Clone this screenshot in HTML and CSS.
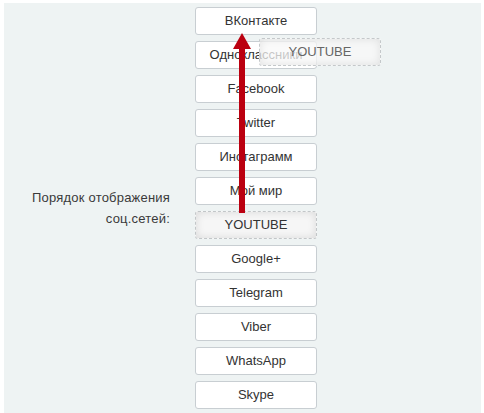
FILE: index.html
```html
<!DOCTYPE html>
<html lang="ru">
<head>
  <meta charset="UTF-8">
  <title>Порядок соц.сетей</title>
  <link rel="stylesheet" href="styles.css">
</head>
<body>
  <div class="panel">
    <div class="row">
      <div class="label">Порядок отображения<br>соц.сетей:</div>
      <ul class="sortable">
        <li class="item">ВКонтакте</li>
        <li class="item">Одноклассники</li>
        <li class="item">Facebook</li>
        <li class="item">Twitter</li>
        <li class="item">Инстаграмм</li>
        <li class="item">Мой мир</li>
        <li class="item placeholder">YOUTUBE</li>
        <li class="item">Google+</li>
        <li class="item">Telegram</li>
        <li class="item">Viber</li>
        <li class="item">WhatsApp</li>
        <li class="item">Skype</li>
      </ul>
    </div>

    <!-- element being dragged -->
    <div class="item helper">YOUTUBE</div>

    <!-- hint arrow -->
    <svg class="arrow" width="480" height="410" viewBox="0 0 480 410">
      <line x1="238" y1="210" x2="238" y2="42" stroke="#bb0010" stroke-width="6"/>
      <polygon points="238,30 229,46 247,46" fill="#bb0010"/>
    </svg>
  </div>
</body>
</html>
```

FILE: styles.css
```css
body {
  margin: 0;
  background: #fff;
  font-family: Arial, 'Liberation Sans', sans-serif;
  font-size: 13px;
  color: #333;
}

.panel {
  position: relative;
  margin: 3px 3px 0 4px;
  padding: 4px 0 4px;
  background-color: #eef3f3;
  min-height: 406px;
  box-sizing: border-box;
}

.row {
  display: flex;
  align-items: center;
  gap: 25px;
}

.label {
  width: 166px;
  text-align: right;
  line-height: 21px;
  color: #3a3a3a;
  letter-spacing: 0.2px;
}

.sortable {
  list-style: none;
  margin: 0;
  padding: 0;
  display: flex;
  flex-direction: column;
  gap: 6px;
}

.item {
  width: 122px;
  height: 28px;
  box-sizing: border-box;
  border: 1px solid #c8ced2;
  border-radius: 3px;
  background: #fff;
  text-align: center;
  line-height: 26px;
  color: #333;
}

.placeholder {
  border: 1px dashed #c2c6c8;
  background: #f6f6f6;
  box-shadow: inset 0 0 8px rgba(0, 0, 0, 0.12);
}

.helper {
  position: absolute;
  left: 255px;
  top: 35px;
  border: 1px dashed #c4c8ca;
  background: rgba(248, 248, 248, 0.75);
  box-shadow: inset 0 0 8px rgba(0, 0, 0, 0.1);
  color: #666;
}

.arrow {
  position: absolute;
  left: 0;
  top: 0;
  pointer-events: none;
}
```
